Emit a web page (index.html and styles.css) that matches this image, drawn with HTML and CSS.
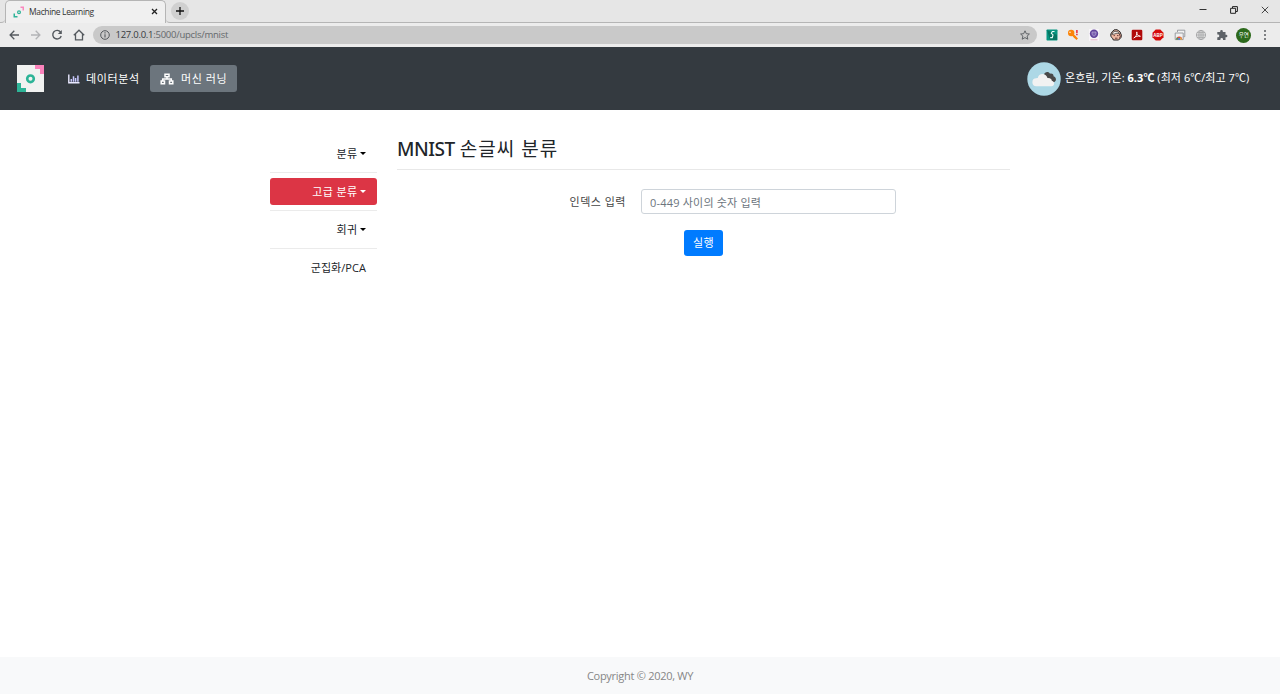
FILE: index.html
```html
<!DOCTYPE html>
<html lang="ko">
<head>
<meta charset="utf-8">
<title>Machine Learning</title>
<link rel="stylesheet" href="styles.css">
</head>
<body>
<div class="window">
  <div class="tabstrip">
    <div class="edge"></div>
    <div class="tab">
      <svg class="favicon" width="12" height="12" viewBox="0 0 12 12"><path d="M7.500.5H11v4H9.500V2h-2z" fill="#fa87bd"/><path d="M.5 7.500H2v2.500h2.500v1.500h-4z" fill="#2eb398"/><circle cx="6" cy="6.200" r="1.400" fill="none" stroke="#2eb398" stroke-width="1.200"/></svg>
      <span class="tab-title">Machine Learning</span>
      <svg class="tab-close" width="7" height="7" viewBox="0 0 7 7"><path d="M1 1l5 5M6 1L1 6" stroke="#222" stroke-width="1.300"/></svg>
    </div>
    <div class="strip-rest">
      <div class="newtab"><svg width="8" height="8" viewBox="0 0 8 8"><path d="M4 0v8M0 4h8" stroke="#111" stroke-width="1.300"/></svg></div>
      <div class="controls">
        <svg width="8" height="10" viewBox="0 0 8 10"><path d="M.5 4.500h7" stroke="#333"/></svg>
        <svg width="8" height="8" viewBox="0 0 8 8"><path d="M2.500 2V.6h4.900v4.900H6M.6 2.300h5v5h-5z" fill="none" stroke="#222" stroke-width="1"/></svg>
        <svg width="8" height="8" viewBox="0 0 8 8"><path d="M.8.8l6.400 6.400M7.200.8L.8 7.200" stroke="#333" stroke-width=".9"/></svg>
      </div>
    </div>
  </div>

  <div class="toolbar">
    <div class="nav-icons">
      <svg width="12" height="12" viewBox="0 0 12 12"><path d="M11 6H2.500M6.300 1.800L2.100 6l4.200 4.200" fill="none" stroke="#555a5f" stroke-width="1.300"/></svg>
      <svg width="12" height="12" viewBox="0 0 12 12"><path d="M1 6h8.500M5.700 1.800L9.900 6l-4.200 4.200" fill="none" stroke="#b3b4b6" stroke-width="1.300"/></svg>
      <svg width="12" height="12" viewBox="0 0 12 12"><path d="M9.600 3.200A4.300 4.300 0 1 0 10.200 7" fill="none" stroke="#555a5f" stroke-width="1.400"/><path d="M10.800 1v4H6.800z" fill="#555a5f"/></svg>
      <svg width="12" height="12" viewBox="0 0 12 12"><path d="M.8 6.300L6 1.200l5.200 5.100M2.500 5v5.800h7V5" fill="none" stroke="#555a5f" stroke-width="1.300"/></svg>
    </div>
    <div class="omnibox">
      <svg width="10" height="10" viewBox="0 0 10 10"><circle cx="5" cy="5" r="4.300" fill="none" stroke="#54585c"/><path d="M5 4.300v3.300M5 2.300v1.100" stroke="#54585c" stroke-width="1.100"/></svg>
      <span class="url"><span class="host">127.0.0.1</span>:5000/upcls/mnist</span>
      <svg class="star" width="10" height="10" viewBox="0 0 10 10"><path d="M5 .8l1.300 2.900 3.100.3-2.300 2.100.7 3.100L5 7.600 2.200 9.200l.7-3.100L.6 4l3.100-.3z" fill="none" stroke="#55595d" stroke-width=".9"/></svg>
    </div>
    <div class="extensions">
      <svg width="12" height="12" viewBox="0 0 12 12"><rect x=".5" y=".5" width="11" height="11" rx=".7" fill="#079681"/><path d="M1 1l3 10h7V6z" fill="#067663"/><path d="M8.500 2.500H6.400L5.300 4.200l1.700 1.700-.7 2.700H4.200" fill="none" stroke="#e8fffa" stroke-width="1.100"/></svg>
      <svg width="12" height="12" viewBox="0 0 12 12"><circle cx="4.200" cy="4" r="3.200" fill="#fb8408"/><path d="M5 5l5.200 5.200" stroke="#fb8408" stroke-width="2.200"/><path d="M7 8.500l1.500-1.500" stroke="#fb8408" stroke-width="2"/><circle cx="3" cy="3.200" r=".7" fill="#fff"/><path d="M9.900 1v3.200M9.900 5v1.200" stroke="#e71931" stroke-width="1.400"/></svg>
      <svg width="12" height="12" viewBox="0 0 12 12"><rect x="1" y="0" width="10" height="12" fill="#f8f5f9"/><circle cx="6" cy="4.800" r="4.200" fill="#63459d"/><path d="M4 3h4v2.500L6 7.300 4 5.500z" fill="#7d63b0" stroke="#d4cae8" stroke-width=".5"/><path d="M2.500 10.800h7" stroke="#dda5b5" stroke-width=".8"/></svg>
      <svg width="12" height="12" viewBox="0 0 12 12"><path d="M.8 5l1.400-2.200L4 .9l3-.2 3 2.100 1.300 3.200-.2 2.300L9.600 10l-1 1H3.300L2.600 9.200.9 7.600z" fill="#f0b9a3" stroke="#252222"/><path d="M1.800 5.500L3.800 2.400h3.400l2.400 2.300L7 4.200 4.300 5z" fill="#f4efec" stroke="#333" stroke-width=".7"/><path d="M3.600 6.600h1.300M7 6.600h1.500M5 9.200h2.500M9.300 5l1 2.500-1 2" fill="none" stroke="#5b302c" stroke-width=".9"/></svg>
      <svg width="12" height="12" viewBox="0 0 12 12"><rect x=".7" y=".7" width="10.600" height="10.600" rx="1.200" fill="#b10a0a"/><path d="M2.800 9C5 7.800 6.200 5.300 5.800 2.900 5.200 4.900 7 7 9.400 7.300 7.200 6.700 4.500 7.200 2.800 9z" fill="none" stroke="#fff" stroke-width=".9"/></svg>
      <svg width="12" height="12" viewBox="0 0 12 12"><path d="M3.700.5h4.600l3.200 3.200v4.600l-3.200 3.200H3.700L.5 8.300V3.700z" fill="#d60b0b"/><text class="abp" x="6" y="7.800" text-anchor="middle">ABP</text></svg>
      <svg width="12" height="12" viewBox="0 0 12 12"><path d="M3.500 3V1.200h7.300v6.500H9.500M1.200 4h8v6.600h-8z" fill="#f1f1f1" stroke="#92959a" stroke-width=".9"/><path d="M2.200 10.400a3 3 0 0 1 6 0z" fill="#de4e3b"/><path d="M2.200 10.400a3 3 0 0 1 1-2.200l1.500 2.200z" fill="#36a860"/><path d="M6.500 8l1.700 2.400H6z" fill="#edc43f"/><circle cx="5.200" cy="10" r="1.100" fill="#4c87ec"/></svg>
      <svg width="12" height="12" viewBox="0 0 12 12"><g fill="none" stroke="#a5a6a7" stroke-width=".9"><circle cx="6" cy="6" r="4.600"/><ellipse cx="6" cy="6" rx="2.100" ry="4.600"/><path d="M1.400 6h9.200M2 3.700h8M2 8.300h8M6 1.400v9.200"/></g></svg>
      <svg width="12" height="12" viewBox="0 0 12 12"><path d="M1.300 3h2.900V2.200a1.300 1.300 0 0 1 2.600 0V3h2.700v2.700h.6a1.300 1.300 0 0 1 0 2.600h-.6V11H7v-.7a1.300 1.300 0 0 0-2.600 0v.7H1.300V8.200H2a1.300 1.300 0 0 0 0-2.600h-.7z" fill="#5d6267"/></svg>
      <div class="avatar">우연</div>
      <svg width="12" height="12" viewBox="0 0 12 12"><g fill="#5a5d61"><circle cx="6" cy="2.100" r="1"/><circle cx="6" cy="6" r="1"/><circle cx="6" cy="9.900" r="1"/></g></svg>
    </div>
  </div>

  <nav class="navbar">
    <svg class="logo" width="27" height="27" viewBox="0 0 27 27"><rect width="27" height="27" fill="#f1f2f1"/><path d="M18 0h9v9h-4V4h-5z" fill="#fb83bc"/><path d="M0 18h4v5h5v4H0z" fill="#2db497"/><circle cx="13.500" cy="13.800" r="3.300" fill="none" stroke="#2db497" stroke-width="2.600"/></svg>
    <a class="nav-link analysis">
      <svg width="12" height="10" viewBox="0 0 12 10"><path d="M.8.5v8.300h10.700" fill="none" stroke="#e8e8ff" stroke-width="1.400"/><path d="M3.300 5v2.700M5.500 2.300v5.400M7.600 4v3.700M9.900 1.500v6.200" stroke="#c9c9ff" stroke-width="1.500"/></svg>
      <span class="t-analysis">데이터분석</span>
    </a>
    <a class="nav-link active">
      <svg width="14" height="12" viewBox="0 0 14 12"><g fill="none" stroke="#fff" stroke-width="1.500"><path d="M5 1.300h4v2.500H5zM1.200 8h3.300v2.800H1.200zM9.500 8h3.300v2.800H9.500zM7 4v2M2.700 8V6h8.600v2"/></g></svg>
      <span class="t-ml">머신 러닝</span>
    </a>
    <div class="weather">
      <svg width="34" height="34" viewBox="0 0 34 34"><circle cx="17" cy="17" r="16.700" fill="#add8e6"/><path d="M17 12.500c.5-2.700 4.800-3.400 6-.8 2.400-.5 3.700.9 3.500 2.500 3.300.8 3.400 5.800-.2 6h-3z" fill="#494949"/><path d="M9.500 24.200a4 4 0 0 1-.2-8c.6-.2 1-.2 1.500-.1.700-5.500 8.200-5.500 9.700-.1 3.300-.2 4.300 1.400 4.300 2.800 3.500.8 2.800 5.400-.2 5.400z" fill="#f2f2f2"/></svg>
      <span class="forecast">온흐림, 기온: <b>6.3℃</b> (최저 6℃/최고 7℃)</span>
    </div>
  </nav>

  <main class="content">
    <aside class="sidebar">
      <a class="side-item"><span>분류</span><i class="caret"></i></a>
      <a class="side-item selected"><span>고급 분류</span><i class="caret"></i></a>
      <a class="side-item"><span>회귀</span><i class="caret"></i></a>
      <a class="side-item"><span class="t-pca">군집화/PCA</span></a>
    </aside>
    <section class="panel">
      <h1><span class="h-latin">MNIST</span> <span class="h-ko">손글씨 분류</span></h1>
      <form class="form">
        <div class="row">
          <label for="index">인덱스 입력</label>
          <input id="index" type="text" placeholder="0-449 사이의 숫자 입력">
        </div>
        <button class="run" type="button">실행</button>
      </form>
    </section>
  </main>

  <footer class="footer"><span>Copyright © 2020, WY</span></footer>
</div>
</body>
</html>
```

FILE: styles.css
```css
* { box-sizing: border-box; }
body {
  margin: 0;
  background: #fff;
  color: #212529;
  font: 11px/16px "Open Sans", "Noto Sans CJK KR", sans-serif;
}
svg { display: block; flex: none; }
span { white-space: nowrap; }
.window { display: flex; flex-direction: column; height: 694px; overflow: hidden; }

.tabstrip { display: flex; height: 23px; background: #e6e6e6; }
.edge { width: 5px; border-bottom: 1px solid #b5b5b5; border-radius: 0 0 4px 0; }
.tab {
  display: flex; align-items: center; width: 161px; padding: 0 7px 1px 7px;
  background: #f0f0f0; border: 1px solid #b5b5b5; border-bottom: 0; border-radius: 5px 5px 0 0;
}
.tab-title { margin-left: 4px; font-size: 8.500px; letter-spacing: -.36px; color: #333; }
.tab-close { margin-left: auto; }
.strip-rest { display: flex; flex: 1; border-bottom: 1px solid #b5b5b5; border-radius: 0 0 0 4px; }
.newtab {
  display: grid; place-items: center; width: 18px; height: 18px; margin: 2px 0 0 5px;
  border-radius: 50%; background: #d0d0d0;
}
.controls { display: flex; align-items: center; gap: 23px; height: 19px; margin-left: auto; padding-right: 11px; }

.toolbar { display: flex; align-items: center; height: 24px; padding: 0 8px; background: #ececec; }
.nav-icons { display: flex; gap: 9.500px; }
.omnibox {
  display: flex; align-items: center; width: 944px; height: 18px; margin-left: 8px; padding: 0 7px;
  border-radius: 9px; background: #c9c9c9;
}
.url { margin-left: 6px; font-size: 9.500px; letter-spacing: -.26px; color: #64686b; }
.host { color: #363a3e; }
.star { margin-left: auto; }
.extensions { display: flex; align-items: center; gap: 9.370px; margin-left: 9px; }
.abp { font: bold 4.500px "Liberation Sans", sans-serif; fill: #fff; }
.avatar {
  display: grid; place-items: center; width: 15px; height: 15px; margin: 0 -1.500px;
  border-radius: 50%; background: #2c691c; color: #fff; font-size: 5.500px; line-height: 10px;
}

.navbar { display: flex; align-items: center; height: 63px; padding: 0 30px 0 17px; background: #343a40; color: #fff; }
.nav-link { display: flex; align-items: center; height: 27px; border-radius: 3px; }
.analysis { margin-left: 24px; width: 82px; }
.t-analysis { margin-left: 6px; letter-spacing: .6px; }
.active { width: 87px; padding-left: 10px; background: #6c757d; }
.t-ml { margin-left: 7px; letter-spacing: .55px; }
.weather { display: flex; align-items: center; gap: 4px; margin-left: auto; }
.forecast { width: 185px; padding-bottom: 2px; letter-spacing: .05px; }

.content { display: flex; flex: 1; gap: 20px; padding: 30px 270px 0; }
.sidebar { display: flex; flex-direction: column; width: 107px; }
.side-item {
  display: flex; align-items: center; justify-content: flex-end; gap: 2.500px;
  height: 27px; padding-right: 11px; border-radius: 3px; letter-spacing: .4px;
  position: relative; margin-bottom: 11px;
}
.side-item:not(:last-child)::after {
  content: ""; position: absolute; left: 0; right: 0; bottom: -6px; height: 1px; background: #ebebeb;
}
.selected { background: #dc3545; color: #fff; }
.caret { margin-bottom: 1px; border: 3.500px solid transparent; border-width: 3.500px 3.500px 0; border-top-color: #000; }
.selected .caret { border-top-color: #fff; }
.t-pca { letter-spacing: .05px; }
.panel { flex: 1; }
h1 {
  height: 30px; margin: 0; border-bottom: 1px solid #e8e8e8;
  font-size: 19px; line-height: 18px; font-weight: 400;
}
.h-latin { font-family: "Noto Sans", "Open Sans", sans-serif; font-weight: 500; letter-spacing: -.45px; }
.h-ko { letter-spacing: 1.050px; }
.form { display: flex; flex-direction: column; padding-top: 19px; }
.row { display: flex; align-items: center; }
label { width: 229px; text-align: right; letter-spacing: .5px; color: #444; }
input {
  width: 255px; height: 25px; margin-left: 15px; padding: 1px 8px 0; border: 1px solid #ced4da; border-radius: 3px;
  font: inherit; letter-spacing: .2px;
}
input::placeholder { color: #6c757d; opacity: 1; }
.run {
  width: 39px; height: 26px; margin: 16px 0 0 287px; padding: 0; border: 0; border-radius: 3px;
  background: #007bff; color: #fff; font: inherit; letter-spacing: .5px;
}

.footer { display: grid; place-items: center; height: 37px; background: #f8f9fa; color: #868686; letter-spacing: -.28px; }
```
